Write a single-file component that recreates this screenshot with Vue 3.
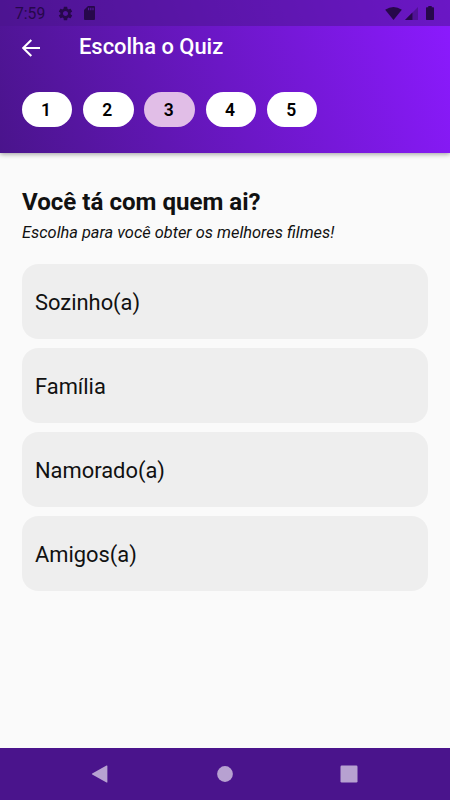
<script setup>
import { ref } from "vue";

const steps = ref([1, 2, 3, 4, 5]);
const currentStep = ref(3);

const options = ref(["Sozinho(a)", "Família", "Namorado(a)", "Amigos(a)"]);
</script>

<template>
	<div class="screen">
		<header class="header">
			<div class="status-bar">
				<span class="time">7:59</span>
				<svg class="gear" viewBox="0 0 24 24">
					<path
						d="M19.14 12.94c.04-.3.06-.61.06-.94s-.02-.64-.07-.94l2.03-1.58c.18-.14.23-.41.12-.61l-1.92-3.32c-.12-.22-.37-.29-.59-.22l-2.39.96c-.5-.38-1.03-.7-1.62-.94l-.36-2.54c-.04-.24-.24-.41-.48-.41h-3.84c-.24 0-.43.17-.47.41l-.36 2.54c-.59.24-1.13.57-1.62.94l-2.39-.96c-.22-.08-.47 0-.59.22L2.74 8.87c-.12.21-.08.47.12.61l2.03 1.58c-.05.3-.09.63-.09.94s.02.64.07.94l-2.03 1.58c-.18.14-.23.41-.12.61l1.92 3.32c.12.22.37.29.59.22l2.39-.96c.5.38 1.03.7 1.62.94l.36 2.54c.05.24.24.41.48.41h3.84c.24 0 .44-.17.47-.41l.36-2.54c.59-.24 1.13-.56 1.62-.94l2.39.96c.22.08.47 0 .59-.22l1.92-3.32c.12-.22.07-.47-.12-.61l-2.01-1.58zM12 15.6c-1.98 0-3.6-1.62-3.6-3.6s1.62-3.6 3.6-3.6 3.6 1.62 3.6 3.6-1.62 3.6-3.6 3.6z"
					/>
				</svg>
				<svg class="sd-card" viewBox="0 0 11 14">
					<path
						fill-rule="evenodd"
						d="M4 0h6a1 1 0 0 1 1 1v12a1 1 0 0 1-1 1H1a1 1 0 0 1-1-1V4zM4 1.8v2.4h1.2V1.8zM6.2 1.8v2.4h1.2V1.8zM8.4 1.8v2.4h1.2V1.8z"
					/>
				</svg>
				<div class="status-right">
					<svg class="wifi" viewBox="0 0 18 14">
						<path d="M0 3Q9-3 18 3L9 14z" />
					</svg>
					<svg class="signal" viewBox="0 0 14 14">
						<path d="M14 0v14H0z" opacity="0.35" />
						<path d="M8 6v8H0z" />
					</svg>
					<svg class="battery" viewBox="0 0 8 14">
						<path
							d="M2.3 0h3.4v1.3H7.3q.7 0 .7.7v11.3q0 .7-.7.7H.7q-.7 0-.7-.7V2q0-.7.7-.7h1.6z"
						/>
					</svg>
				</div>
			</div>
			<div class="title-bar">
				<svg class="back" viewBox="0 0 18 18">
					<path d="M18 9H1.5M9.3 0.9L1.2 9l8.1 8.1" />
				</svg>
				<h1>Escolha o Quiz</h1>
			</div>
			<div class="steps">
				<button
					v-for="step in steps"
					:key="step"
					:class="{ active: step === currentStep }"
					@click="currentStep = step"
				>
					{{ step }}
				</button>
			</div>
		</header>
		<main class="content">
			<h2>Você tá com quem ai?</h2>
			<p>Escolha para você obter os melhores filmes!</p>
			<div class="options">
				<button v-for="option in options" :key="option">
					{{ option }}
				</button>
			</div>
		</main>
		<nav class="nav-bar">
			<svg viewBox="0 0 18 18">
				<path d="M15.5.6q.9-.4.9.5v15.8q0 .9-.9.5L1.2 9.5q-.8-.5 0-1z" />
			</svg>
			<svg viewBox="0 0 18 18">
				<circle cx="9" cy="9" r="7.9" />
			</svg>
			<svg viewBox="0 0 18 18">
				<rect x="0.5" y="0.5" width="17" height="17" rx="1.2" />
			</svg>
		</nav>
	</div>
</template>

<style>
body {
	margin: 0;
}
</style>

<style scoped>
.screen {
	height: 800px;
	display: flex;
	flex-direction: column;
	background-color: #fafafa;
	font-family: Roboto, sans-serif;
	overflow: hidden;
}

.header {
	height: 153px;
	flex-shrink: 0;
	background: linear-gradient(71deg, #4a148c, #8c1aff);
	box-shadow: 0 1px 5px rgba(0, 0, 0, 0.4);
}

.status-bar {
	height: 26px;
	display: flex;
	align-items: center;
	box-sizing: border-box;
	padding: 0 16px 0 15px;
	background-color: rgba(74, 20, 140, 0.5);
	color: #27084b;
}

.status-bar svg {
	fill: #27084b;
}

.time {
	width: 42px;
	font-size: 15.7px;
	line-height: 26px;
	padding-top: 1px;
}

.gear {
	width: 17px;
	height: 17px;
}

.sd-card {
	width: 11px;
	height: 14px;
	margin-left: 10px;
}

.status-right {
	display: flex;
	align-items: center;
	margin-left: auto;
}

.wifi {
	width: 17px;
	height: 13px;
}

.signal {
	width: 13px;
	height: 13px;
	margin-left: 3px;
}

.battery {
	width: 8px;
	height: 14px;
	margin-left: 8px;
}

.title-bar {
	height: 44px;
	display: flex;
	align-items: center;
	padding-left: 22px;
}

.back {
	width: 18px;
	height: 18px;
	fill: none;
	stroke: #ffffff;
	stroke-width: 2.1;
}

.title-bar h1 {
	margin: 0 0 3px 39px;
	font-size: 21.9px;
	font-weight: 500;
	color: #ffffff;
}

.steps {
	display: flex;
	gap: 10.9px;
	padding: 22px 21.9px 0;
}

.steps button {
	width: 50.4px;
	height: 35px;
	padding: 0 2px 0 0;
	border: none;
	border-radius: 17.5px;
	background-color: #ffffff;
	color: #000000;
	font-family: inherit;
	font-size: 17.5px;
	font-weight: 600;
	cursor: pointer;
}

.steps button.active {
	background-color: #e1bee7;
}

.content {
	flex: 1;
	padding: 33px 22px 0;
}

.content h2 {
	margin: 0;
	font-size: 24.1px;
	line-height: 32px;
	font-weight: 700;
	color: #111111;
}

.content p {
	margin: 4px 0 0;
	font-size: 16.4px;
	line-height: 22px;
	font-style: italic;
	color: #111111;
}

.options {
	display: flex;
	flex-direction: column;
	gap: 9.1px;
	margin-top: 20px;
}

.options button {
	height: 75px;
	padding: 1px 13px 0;
	border: none;
	border-radius: 16.4px;
	background-color: #eeeeee;
	color: #111111;
	font-family: inherit;
	font-size: 21.9px;
	text-align: left;
	cursor: pointer;
}

.nav-bar {
	height: 52.4px;
	display: flex;
	justify-content: space-between;
	align-items: center;
	box-sizing: border-box;
	padding: 0 92px 0 91px;
	background-color: #4a148c;
}

.nav-bar svg {
	width: 18px;
	height: 18px;
	fill: #b7a1d1;
}
</style>
